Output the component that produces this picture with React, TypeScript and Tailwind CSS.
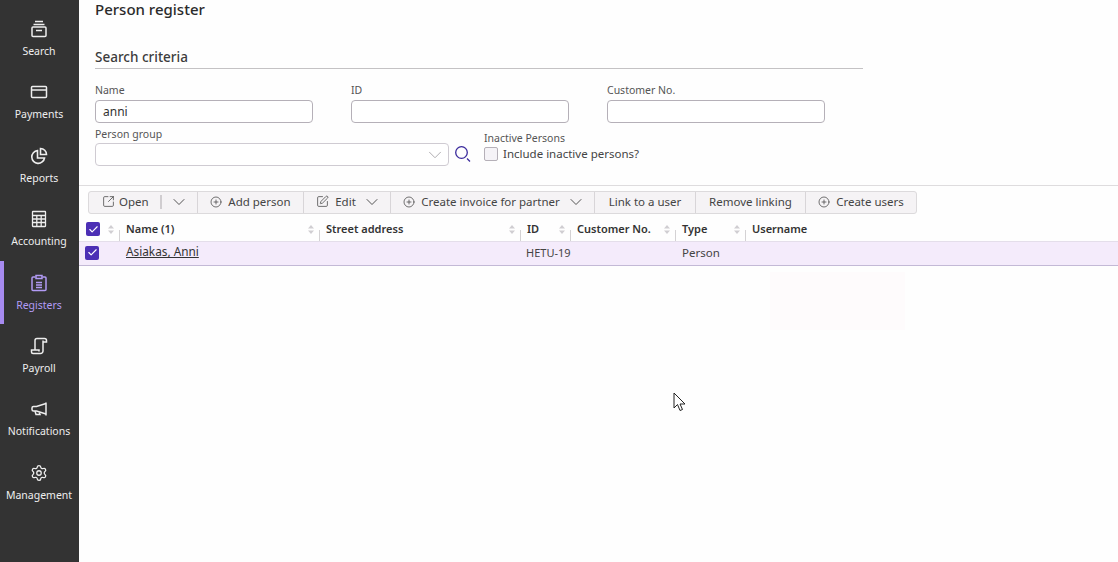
import { ChevronDown, CirclePlus, Settings, SquareArrowOutUpRight, SquarePen, Check } from 'lucide-react';
import type { ReactNode } from 'react';

const font = "font-['Noto_Sans',sans-serif]";

function ArchiveIcon() {
  return (
    <svg width="18" height="18" viewBox="0 0 18 18" fill="none" stroke="currentColor" strokeWidth="1.5">
      <path d="M5 1.500h8M3.500 4.500h11" />
      <rect x="2" y="7" width="14" height="9.500" rx="1" />
      <path d="M6 10.500h6" />
    </svg>
  );
}

function CardIcon() {
  return (
    <svg width="18" height="18" viewBox="0 0 18 18" fill="none" stroke="currentColor" strokeWidth="1.5">
      <rect x="1.500" y="3.500" width="15" height="11" rx="1" />
      <path d="M1.500 7h15" />
    </svg>
  );
}

function PieIcon() {
  return (
    <svg width="18" height="18" viewBox="0 0 18 18" fill="none" stroke="currentColor" strokeWidth="1.6">
      <path d="M7.500 3.600a6.400 6.400 0 1 0 7 7.400H7.500z" />
      <path d="M10.500 1.500a6 6 0 0 1 6 6h-6z" />
    </svg>
  );
}

function CalcIcon() {
  return (
    <svg width="18" height="18" viewBox="0 0 18 18" fill="none" stroke="currentColor" strokeWidth="1.3">
      <rect x="2.500" y="1.500" width="13" height="15" rx="0.5" />
      <path d="M2.500 5.500h13M2.500 9h13M2.500 12.500h13M6.800 5.500v11M11.200 5.500v11" />
    </svg>
  );
}

function ClipboardIcon() {
  return (
    <svg width="18" height="18" viewBox="0 0 18 18" fill="none" stroke="currentColor" strokeWidth="1.5">
      <path d="M5.500 3H3a1 1 0 0 0-1 1v11.500a1 1 0 0 0 1 1h12a1 1 0 0 0 1-1V4a1 1 0 0 0-1-1h-2.500" />
      <path d="M6 1.500h6v3H6zM6 8.500h6M6 11h6M6 13.500h6" />
    </svg>
  );
}

function ScrollIcon() {
  return (
    <svg width="18" height="18" viewBox="0 0 18 18" fill="none" stroke="currentColor" strokeWidth="1.5">
      <path d="M5 13V3.500a2 2 0 0 1 2-2h7.500a2 2 0 0 1 2 2V5h-3.500" />
      <path d="M13 3.500V14a2.500 2.500 0 0 1-2.500 2.500H3a1.500 1.500 0 0 1-1.500-1.500v-2H9v1.500" />
    </svg>
  );
}

function HornIcon() {
  return (
    <svg width="18" height="18" viewBox="0 0 18 18" fill="none" stroke="currentColor" strokeWidth="1.5">
      <path d="M16 2.500v13" />
      <path d="M16 3.500 6.500 6.500H3.500A1.500 1.500 0 0 0 2 8v1.500A1.500 1.500 0 0 0 3.500 11h3l9.500 3" />
      <path d="M5 11l1 3.500h4l-.7-2" />
    </svg>
  );
}

const navItems: { label: string; icon: ReactNode; active?: boolean }[] = [
  { label: 'Search', icon: <ArchiveIcon /> },
  { label: 'Payments', icon: <CardIcon /> },
  { label: 'Reports', icon: <PieIcon /> },
  { label: 'Accounting', icon: <CalcIcon /> },
  { label: 'Registers', icon: <ClipboardIcon />, active: true },
  { label: 'Payroll', icon: <ScrollIcon /> },
  { label: 'Notifications', icon: <HornIcon /> },
  { label: 'Management', icon: <Settings size={18} strokeWidth={1.7} /> },
];

function Sidebar() {
  return (
    <aside className="flex h-[562px] w-[79px] shrink-0 flex-col bg-[#333333] pt-[7px]">
      {navItems.map(item => (
        <div
          key={item.label}
          className={`flex h-[63.4px] flex-col items-center border-l-4 pr-[5px] pt-[13px] ${
            item.active ? 'border-[#a78bf0] text-[#b29bf5]' : 'border-transparent text-[#eeeeee]'
          }`}
        >
          <div className="flex h-[18px] items-center justify-center">{item.icon}</div>
          <span className="mt-[6px] text-[10.5px] leading-[15px] whitespace-nowrap">{item.label}</span>
        </div>
      ))}
    </aside>
  );
}

function Field({ label, value }: { label: string; value?: string }) {
  return (
    <div className="w-[218px]">
      <div className="h-[18px] text-[10.5px] leading-[16px] text-[#555555]">{label}</div>
      <div className="flex h-[23px] items-center rounded-[4px] border border-[#b5b0b8] bg-white px-[7px] text-[12px] text-[#333333]">
        {value}
      </div>
    </div>
  );
}

function ToolButton({ icon, label, chevron, width }: { icon?: ReactNode; label: string; chevron?: boolean; width: string }) {
  return (
    <div className={`flex h-full shrink-0 items-center justify-center gap-[6px] border-r border-[#d8d5d8] pb-[2px] last:border-r-0 ${width}`}>
      {icon}
      <span>{label}</span>
      {chevron && <ChevronDown size={20} strokeWidth={1.1} className="-mr-[4px]" />}
    </div>
  );
}

function Toolbar() {
  return (
    <div className="ml-[9px] mt-[5px] flex h-[23px] w-[829px] items-center rounded-[3px] border border-[#dcdadc] bg-[#f5f3f5] text-[11.5px] text-[#444444]">
      <div className="flex h-full w-[109px] shrink-0 items-center border-r border-[#d8d5d8] pb-[2px] pl-[13px]">
        <SquareArrowOutUpRight size={13} strokeWidth={1.4} />
        <span className="ml-[4px]">Open</span>
        <div className="ml-[11px] h-[14px] w-[2px] bg-[#d0cdd0]" />
        <ChevronDown size={20} strokeWidth={1.1} className="ml-[7px]" />
      </div>
      <ToolButton width="w-[106px]" icon={<CirclePlus size={12} strokeWidth={1.5} />} label="Add person" />
      <ToolButton width="w-[87px]" icon={<SquarePen size={13} strokeWidth={1.4} />} label="Edit" chevron />
      <ToolButton width="w-[204px]" icon={<CirclePlus size={12} strokeWidth={1.5} />} label="Create invoice for partner" chevron />
      <ToolButton width="w-[101px]" label="Link to a user" />
      <ToolButton width="w-[110px]" label="Remove linking" />
      <ToolButton width="w-[110px]" icon={<CirclePlus size={12} strokeWidth={1.5} />} label="Create users" />
    </div>
  );
}

const columns = [
  { label: 'Name (1)', width: 'w-[200px]' },
  { label: 'Street address', width: 'w-[201px]' },
  { label: 'ID', width: 'w-[50px]' },
  { label: 'Customer No.', width: 'w-[105px]' },
  { label: 'Type', width: 'w-[70px]' },
];

function TickBox() {
  return (
    <div className="flex h-[14px] w-[14px] items-center justify-center rounded-[2px] bg-[#4c2fb5]">
      <Check size={11} strokeWidth={2.5} className="text-white" />
    </div>
  );
}

function SortArrows() {
  return (
    <svg width="6" height="9" viewBox="0 0 6 9" fill="#d0ced2">
      <path d="M3 0l3 3.500H0zM3 9l3-3.500H0z" />
    </svg>
  );
}

function HeaderLabel({ label }: { label: string }) {
  return (
    <div className="flex h-full items-center">
      <div className="h-[11px] w-px self-end bg-[#d4d2d4]" />
      <span className="pl-[6px]">{label}</span>
    </div>
  );
}

function PersonTable() {
  return (
    <div className="mt-[4px]">
      <div className="flex h-[23px] items-center text-[11px] font-semibold text-[#333333]">
        <div className="flex h-full w-[40px] items-center justify-between pb-[1px] pl-[7px] pr-[5px]">
          <TickBox />
          <SortArrows />
        </div>
        {columns.map(col => (
          <div key={col.label} className={`flex h-full items-center justify-between pr-[5px] ${col.width}`}>
            <HeaderLabel label={col.label} />
            <SortArrows />
          </div>
        ))}
        <HeaderLabel label="Username" />
      </div>
      <div className="flex h-[25px] items-center border-b border-[#c3b9d6] border-t border-t-[#e4deea] bg-[#f4ebfb] pb-[2px] text-[11.5px] text-[#444444]">
        <div className="w-[47px] pl-[6px]">
          <TickBox />
        </div>
        <a className="-mt-[1px] w-[400px] text-[11.8px] text-[#333333] underline">Asiakas, Anni</a>
        <span className="mt-[1px] w-[156px] text-[11px]">HETU-19</span>
        <span>Person</span>
      </div>
    </div>
  );
}

export default function App() {
  return (
    <div className={`relative flex h-[562px] w-[1118px] overflow-hidden bg-[#fefefe] ${font}`}>
      <Sidebar />
      <main className="min-w-0 flex-1">
        <div className="px-[16px]">
          <h1 className="text-[15px] leading-[19px] font-medium text-[#2b2b2b]">Person register</h1>
          <h2 className="mt-[29px] w-[768px] border-b border-[#c4c2c4] pb-[1px] text-[13.5px] leading-[19px] font-medium text-[#3c3c3c]">
            Search criteria
          </h2>
          <div className="mt-[13px] flex gap-[38px]">
            <Field label="Name" value="anni" />
            <Field label="ID" />
            <Field label="Customer No." />
          </div>
          <div className="mt-[3px] flex">
            <div className="w-[354px]">
              <div className="h-[17px] text-[10.5px] leading-[16px] text-[#555555]">Person group</div>
              <div className="flex h-[23px] items-center justify-end rounded-[4px] border border-[#cfcbd2] bg-white pr-[2px] text-[#a9a6ab]">
                <ChevronDown size={22} strokeWidth={1} />
              </div>
            </div>
            <svg className="ml-[5px] mt-[19px]" width="18" height="18" viewBox="0 0 18 18" fill="none" stroke="#3a2a9c" strokeWidth="1.300">
              <circle cx="7.500" cy="7.500" r="5.800" />
              <path d="M13 13.500l3 3" />
            </svg>
            <div className="ml-[12px] pt-[4px]">
              <div className="h-[15px] text-[10.5px] leading-[16px] text-[#555555]">Inactive Persons</div>
              <div className="flex items-center gap-[5px] text-[11.5px] text-[#444444]">
                <div className="h-[14px] w-[14px] rounded-[2px] border border-[#b5b0b8] bg-[#f5f3f7]" />
                Include inactive persons?
              </div>
            </div>
          </div>
        </div>
        <div className="mt-[19px] border-t border-[#dedcde]">
          <Toolbar />
          <PersonTable />
        </div>
      </main>
      <div className="absolute left-[770px] top-[272px] h-[58px] w-[135px] bg-[#fefbfc]" />
      <svg className="absolute left-[673px] top-[392px]" width="13" height="20" viewBox="0 0 13 20" fill="white" stroke="#222222" strokeWidth="1">
        <path d="M1 1v15l3.500-3.500 2.500 6 2.500-1-2.500-5.500h5z" />
      </svg>
    </div>
  );
}
